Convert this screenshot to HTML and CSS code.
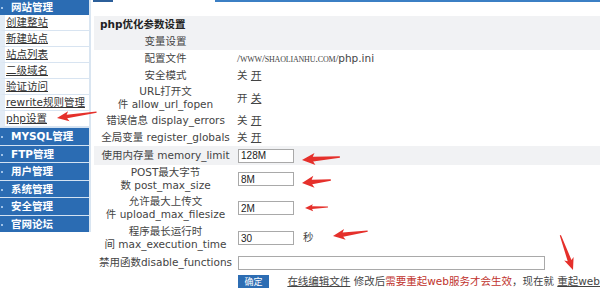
FILE: index.html
```html
<!DOCTYPE html>
<html>
<head>
  <meta charset="utf-8">
  <title>php设置</title>
  <link rel="stylesheet" href="styles.css">
</head>
<body>
  <div class="page">
    <div class="sidebar">
      <div class="menu-head first">网站管理</div>
      <ul class="sub">
        <li><a href="#">创建整站</a></li>
        <li><a href="#">新建站点</a></li>
        <li><a href="#">站点列表</a></li>
        <li><a href="#">二级域名</a></li>
        <li><a href="#">验证访问</a></li>
        <li><a href="#">rewrite规则管理</a></li>
        <li><a href="#">php设置</a></li>
      </ul>
      <div class="menu-head">MYSQL管理</div>
      <div class="menu-head">FTP管理</div>
      <div class="menu-head">用户管理</div>
      <div class="menu-head">系统管理</div>
      <div class="menu-head">安全管理</div>
      <div class="menu-head">官网论坛</div>
    </div>

    <div class="main">
      <div class="topbar"><span class="tab"></span><span class="line"></span></div>

      <table class="form">
        <tr class="caption one"><td colspan="2" class="title">php优化参数设置</td></tr>
        <tr class="caption one"><td class="label">变量设置</td><td></td></tr>
        <tr class="one">
          <td class="label">配置文件</td>
          <td><span class="path">/www/shaolianhu.com/</span>php.ini</td>
        </tr>
        <tr class="one">
          <td class="label">安全模式</td>
          <td>关 <a href="#">开</a></td>
        </tr>
        <tr class="two">
          <td class="label">URL打开文<br>件 allow_url_fopen</td>
          <td>开 <a href="#">关</a></td>
        </tr>
        <tr class="one">
          <td class="label">错误信息 display_errors</td>
          <td>关 <a href="#">开</a></td>
        </tr>
        <tr class="one">
          <td class="label">全局变量 register_globals</td>
          <td>关 <a href="#">开</a></td>
        </tr>
        <tr class="inp hl">
          <td class="label">使用内存量 memory_limit</td>
          <td><input class="txt" type="text" value="128M"></td>
        </tr>
        <tr class="two">
          <td class="label">POST最大字节<br>数 post_max_size</td>
          <td><input class="txt" type="text" value="8M"></td>
        </tr>
        <tr class="two tall">
          <td class="label">允许最大上传文<br>件 upload_max_filesize</td>
          <td><input class="txt" type="text" value="2M"></td>
        </tr>
        <tr class="two tall">
          <td class="label">程序最长运行时<br>间 max_execution_time</td>
          <td><input class="txt" type="text" value="30"><span class="unit">秒</span></td>
        </tr>
        <tr class="inp">
          <td class="label">禁用函数disable_functions</td>
          <td><input class="txt wide" type="text" value=""></td>
        </tr>
        <tr class="inp">
          <td></td>
          <td class="actions">
            <button class="btn">确定</button>
            <a href="#" class="edit">在线编辑文件</a>
            修改后<span class="warn">需要重起web服务才会生效</span>，现在就 <a href="#">重起web</a>
          </td>
        </tr>
      </table>
    </div>
  </div>

  <!-- red arrows drawn over the screenshot -->
  <svg class="marks" width="600" height="297" viewBox="0 0 600 297">
    <g fill="#e5302b">
      <path transform="translate(57,118) rotate(-8.5)" d="M0 0 L12 -5 L10 -1.8 L40 -0.6 L40 0.6 L10 1.8 L12 5 Z"/>
      <path transform="translate(302,160) rotate(-4.5)" d="M0 0 L13 -6 L11 -2.3 L38 -0.7 L38 0.7 L11 2.3 L13 6 Z"/>
      <path transform="translate(302,183) rotate(-6)" d="M0 0 L12 -6 L10 -2.3 L29 -0.7 L29 0.7 L10 2.3 L12 6 Z"/>
      <path transform="translate(305,208) rotate(-2.5)" d="M0 0 L8 -3.5 L7 -1.4 L23 -0.5 L23 0.5 L7 1.4 L8 3.5 Z"/>
      <path transform="translate(333,236) rotate(-8)" d="M0 0 L12 -5.5 L10 -2.2 L35 -0.7 L35 0.7 L10 2.2 L12 5.5 Z"/>
      <path transform="translate(573,270) rotate(-110)" d="M0 0 L12 -5 L10 -2 L37 -0.6 L37 0.6 L10 2 L12 5 Z"/>
    </g>
  </svg>
</body>
</html>
```

FILE: styles.css
```css
body {
  margin: 0;
  font-family: "DejaVu Sans", "Noto Sans CJK SC", sans-serif;
  font-size: 10.5px;
  color: #444;
  background: #fff;
  position: relative;
  width: 600px;
  height: 297px;
  overflow: hidden;
}
a {
  color: #444;
}
.page {
  display: flex;
  align-items: flex-start;
}

/* left menu */
.sidebar {
  width: 89px;
  flex-shrink: 0;
  border-right: 2px solid #d9e5f1;
}
.menu-head {
  height: 16.5px;
  line-height: 16.5px;
  border-top: 1px solid #d3e2f2;
  background: #2b6cb3;
  color: #fff;
  font-weight: bold;
  white-space: nowrap;
}
.menu-head.first {
  height: 15px;
  line-height: 15px;
  border-top: none;
}
.menu-head::before {
  content: "";
  display: inline-block;
  width: 2px;
  height: 2px;
  margin: 0 8px 0 1px;
  vertical-align: middle;
  background: #9fc2e8;
}
.sub {
  list-style: none;
  margin: 0;
  padding: 0;
}
.sub li {
  height: 15px;
  line-height: 15px;
  border-bottom: 1px solid #d8e4f1;
  border-left: 5px solid #e3ecf6;
  padding-left: 1px;
  white-space: nowrap;
}
.sub a {
  color: #333;
}

/* main area */
.main {
  flex: 1;
}
.topbar {
  display: flex;
  height: 16px;
}
.topbar .tab {
  width: 20px;
  height: 2px;
  margin-left: 2px;
  background: #2c5f9a;
}
.topbar .line {
  flex: 1;
  height: 2px;
  margin-left: 102px;
  background: #3b7fc4;
}

.form {
  margin-left: 3px;
  width: 506px;
  border-collapse: collapse;
  line-height: 13px;
}
.form td {
  padding: 0;
  vertical-align: middle;
  white-space: nowrap;
}
.form .label {
  width: 146px;
  text-align: center;
}
.form .one td {
  height: 17px;
}
.form .two td {
  height: 28px;
}
.form .two.tall td {
  height: 30px;
}
.form .inp td {
  height: 19px;
}
.form .caption td,
.form .hl td {
  background: #f1f2f4;
}
.form .title {
  padding-left: 6px;
  font-weight: bold;
  color: #222;
}

.path {
  font-family: "Liberation Serif", serif;
  font-variant: small-caps;
  font-size: 11px;
  letter-spacing: -0.2px;
}

.txt {
  box-sizing: border-box;
  width: 56px;
  height: 14px;
  margin: 0 0 0 1px;
  padding: 0 2px;
  border: 1px solid #a9a9a9;
  font-family: "Liberation Sans", sans-serif;
  font-size: 10px;
  color: #222;
  vertical-align: middle;
}
.txt.wide {
  width: 307px;
}
.unit {
  margin-left: 9px;
}

.actions {
  font-size: 10.5px;
}
.btn {
  width: 31px;
  height: 13px;
  margin-left: 1px;
  padding: 0;
  border: none;
  background: #2d6db3;
  color: #fff;
  font-family: "Noto Sans CJK SC", sans-serif;
  font-size: 9px;
  line-height: 13px;
  vertical-align: middle;
}
.edit {
  margin-left: 15px;
}
.warn {
  color: #c0322c;
}

.marks {
  position: absolute;
  top: 0;
  left: 0;
  pointer-events: none;
}
```
